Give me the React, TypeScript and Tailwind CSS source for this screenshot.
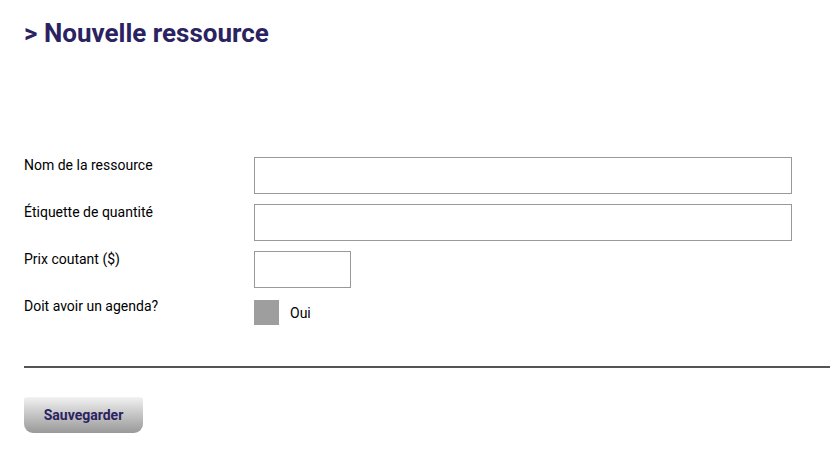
export default function App() {
  const fields = [
    { label: "Nom de la ressource", width: "w-[538px]" },
    { label: "Étiquette de quantité", width: "w-[538px]" },
    { label: "Prix coutant ($)", width: "w-[97px]" },
  ];

  return (
    <div className="min-h-screen bg-white font-['Roboto',sans-serif] text-[14px] text-black">
      <div className="pl-6 pt-[17px]">
        <h1 className="text-[26px] font-bold leading-[32px] text-[#2b2361]">&gt; Nouvelle ressource</h1>

        <form className="mt-[108px]" onSubmit={(e) => e.preventDefault()}>
          <div className="flex flex-col gap-[10px]">
            {fields.map((f) => (
              <div key={f.label} className="flex items-start">
                <label className="w-[230px] leading-[16px]">{f.label}</label>
                <input
                  type="text"
                  className={`h-[37px] ${f.width} border border-[#999] bg-white outline-none`}
                />
              </div>
            ))}
            <div className="flex items-start">
              <label className="w-[230px] leading-[16px]">Doit avoir un agenda?</label>
              <div className="mt-[2px] flex items-center gap-[11px]">
                <span className="block h-[25px] w-[25px] bg-[#9e9e9e]" />
                <span className="leading-[16px]">Oui</span>
              </div>
            </div>
          </div>

          <hr className="mt-[41px] border-0 border-t-2 border-[#555]" />

          <button
            type="submit"
            className="mt-[29px] h-[36px] w-[119px] rounded-t-[3px] rounded-b-[9px] bg-gradient-to-b from-[#f2f2f2] to-[#999] text-[14px] font-bold text-[#2b2361]"
          >
            Sauvegarder
          </button>
        </form>
      </div>
    </div>
  );
}
